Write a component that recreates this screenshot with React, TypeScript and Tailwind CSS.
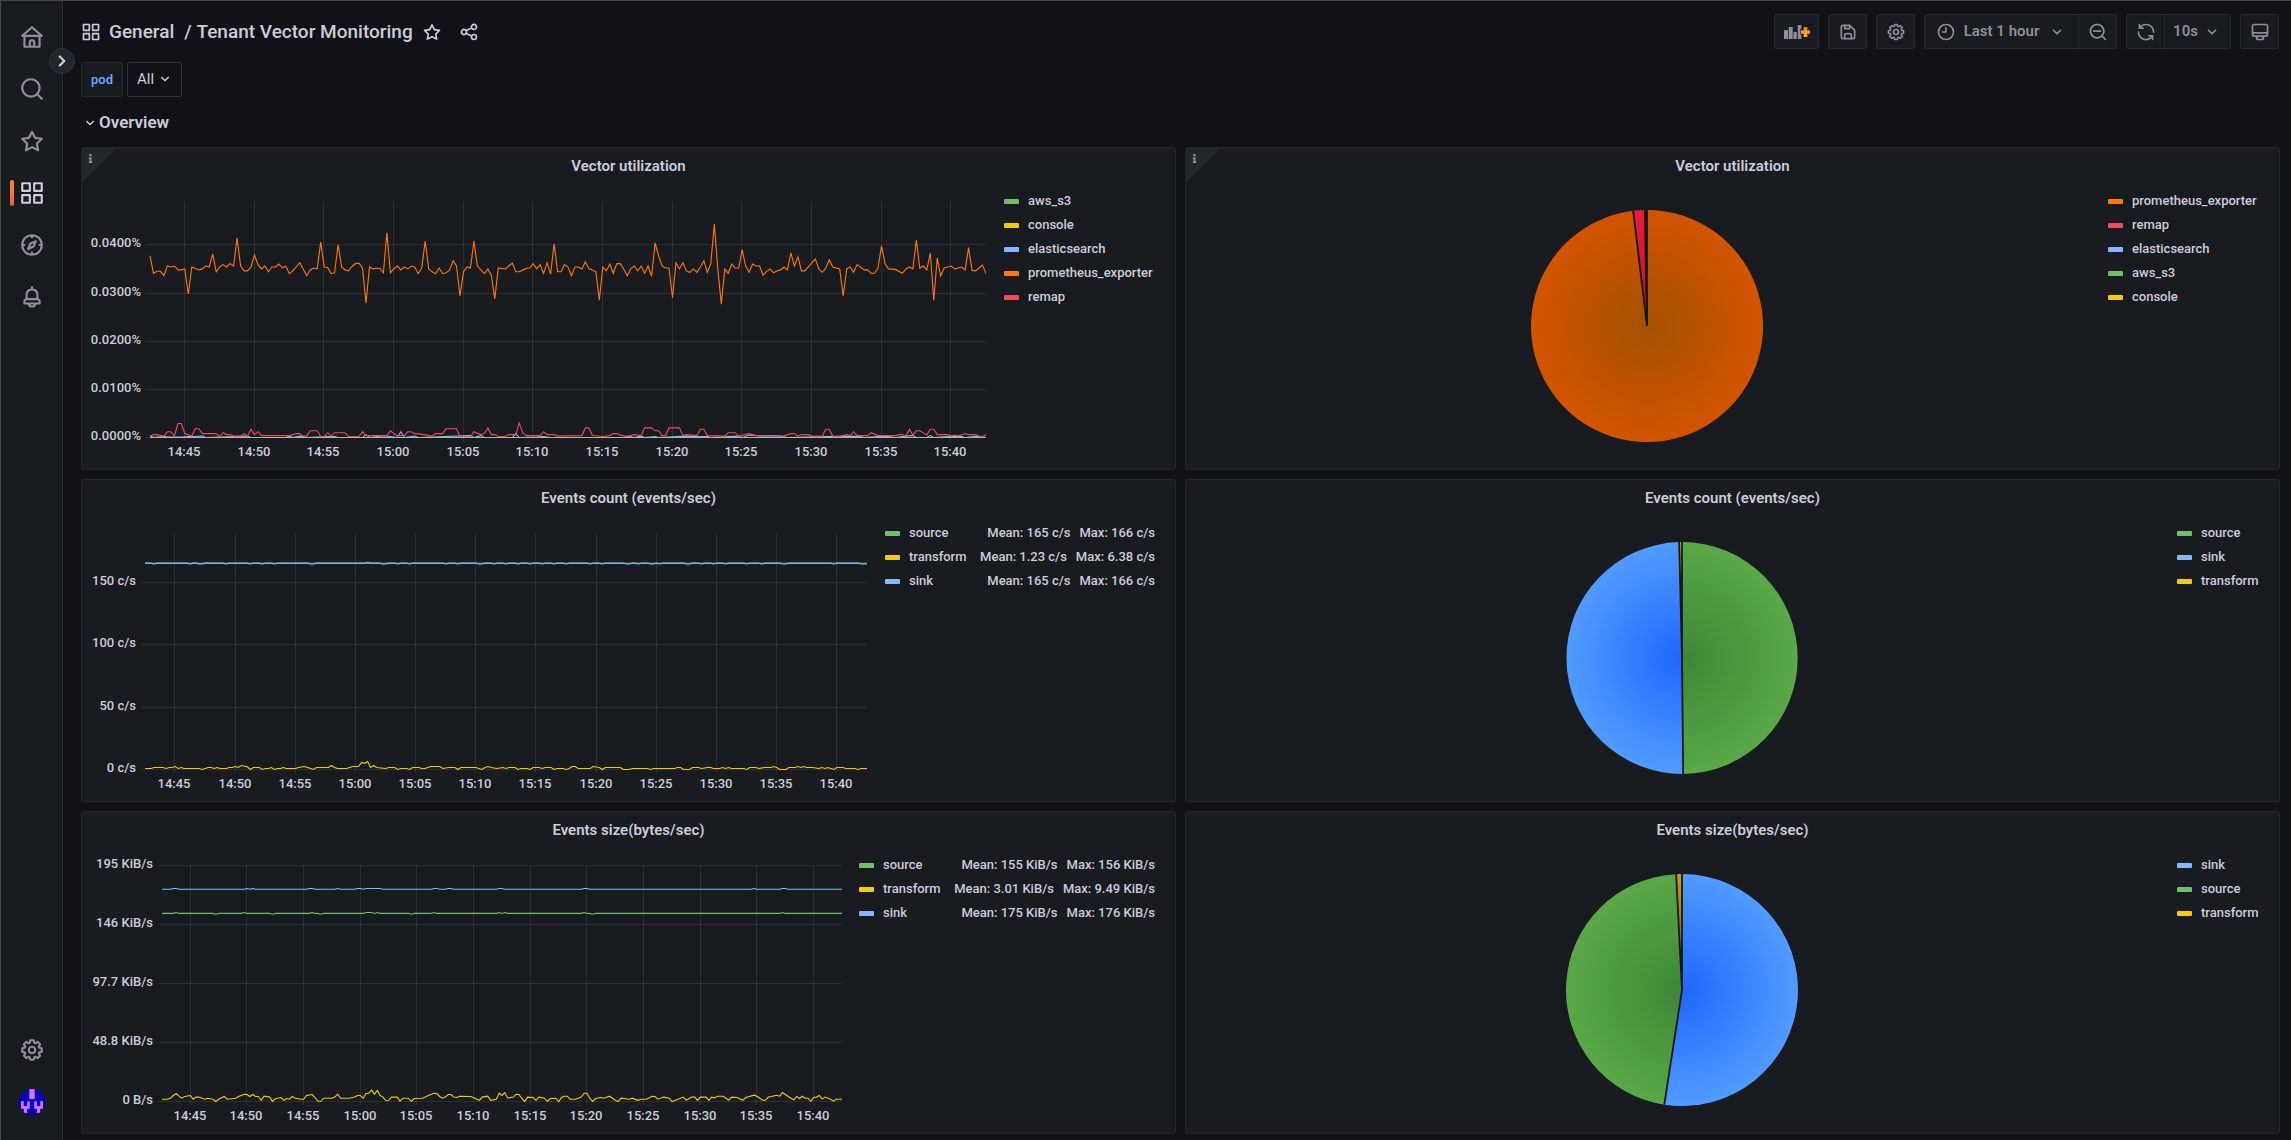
import React, { useLayoutEffect, useRef, useState } from "react";
import { FaInfo } from "react-icons/fa";

const GREEN = "#73bf69";
const YELLOW = "#f2cc0c";
const BLUE = "#8ab8ff";
const ORANGE = "#ff780a";
const RED = "#f2495c";

const ICONS = {
  home: "M21.66,10.25l-9-8a1,1,0,0,0-1.32,0l-9,8a1,1,0,0,0-.27,1.11A1,1,0,0,0,3,12H4v9a1,1,0,0,0,1,1H19a1,1,0,0,0,1-1V12h1a1,1,0,0,0,.93-.64A1,1,0,0,0,21.66,10.25ZM13,20H11V17a1,1,0,0,1,2,0Zm5,0H15V17a3,3,0,0,0-6,0v3H6V12H18ZM5.63,10,12,4.34,18.37,10Z",
  search:
    "M21.71,20.29,18,16.61A9,9,0,1,0,16.61,18l3.68,3.68a1,1,0,0,0,1.42,0A1,1,0,0,0,21.71,20.29ZM11,18a7,7,0,1,1,7-7A7,7,0,0,1,11,18Z",
  star: "M22,9.67A1,1,0,0,0,21.14,9l-5.69-.83L12.9,3a1,1,0,0,0-1.8,0L8.55,8.16,2.86,9a1,1,0,0,0-.81.68,1,1,0,0,0,.25,1l4.13,4-1,5.68A1,1,0,0,0,6.9,21.44L12,18.77l5.1,2.67a.93.93,0,0,0,.46.12,1,1,0,0,0,.59-.19,1,1,0,0,0,.4-1l-1-5.68,4.13-4A1,1,0,0,0,22,9.67Zm-6.15,4a1,1,0,0,0-.29.88l.72,4.2-3.76-2a1.06,1.06,0,0,0-.94,0l-3.76,2,.72-4.2a1,1,0,0,0-.29-.88l-3-3,4.21-.61a1,1,0,0,0,.76-.55L12,5.7l1.88,3.82a1,1,0,0,0,.76.55l4.21.61Z",
  apps: "M10,13H3a1,1,0,0,0-1,1v7a1,1,0,0,0,1,1h7a1,1,0,0,0,1-1V14A1,1,0,0,0,10,13ZM9,20H4V15H9ZM21,2H14a1,1,0,0,0-1,1v7a1,1,0,0,0,1,1h7a1,1,0,0,0,1-1V3A1,1,0,0,0,21,2ZM20,9H15V4h5Zm1,4H14a1,1,0,0,0-1,1v7a1,1,0,0,0,1,1h7a1,1,0,0,0,1-1V14A1,1,0,0,0,21,13Zm-1,7H15V15h5ZM10,2H3A1,1,0,0,0,2,3v7a1,1,0,0,0,1,1h7a1,1,0,0,0,1-1V3A1,1,0,0,0,10,2ZM9,9H4V4H9Z",
  compass:
    "M12,2A10,10,0,1,0,22,12,10,10,0,0,0,12,2Zm1,17.93V19a1,1,0,0,0-2,0v.93A8,8,0,0,1,4.07,13H5a1,1,0,0,0,0-2H4.07A8,8,0,0,1,11,4.07V5a1,1,0,0,0,2,0V4.07A8,8,0,0,1,19.93,11H19a1,1,0,0,0,0,2h.93A8,8,0,0,1,13,19.93ZM15.14,7.55l-5,2.12a1,1,0,0,0-.52.52l-2.12,5a1,1,0,0,0,.21,1.1,1,1,0,0,0,.7.29.93.93,0,0,0,.4-.08l5-2.12a1,1,0,0,0,.52-.52l2.12-5a1,1,0,0,0-1.31-1.31Zm-2.49,5.1-2.28,1,1-2.28,2.28-1Z",
  bell: "M18,13.18V10a6,6,0,0,0-5-5.91V3a1,1,0,0,0-2,0V4.09A6,6,0,0,0,6,10v3.18A3,3,0,0,0,4,16v2a1,1,0,0,0,1,1H8.14a4,4,0,0,0,7.72,0H19a1,1,0,0,0,1-1V16A3,3,0,0,0,18,13.18ZM8,10a4,4,0,0,1,8,0v3H8Zm4,10a2,2,0,0,1-1.72-1h3.44A2,2,0,0,1,12,20Zm6-3H6V16a1,1,0,0,1,1-1H17a1,1,0,0,1,1,1Z",
  cog: "M21.32,9.55l-1.89-.63.89-1.78A1,1,0,0,0,20.13,6L18,3.87a1,1,0,0,0-1.15-.19l-1.78.89-.63-1.89A1,1,0,0,0,13.5,2h-3a1,1,0,0,0-.95.68L8.92,4.57,7.14,3.68A1,1,0,0,0,6,3.87L3.87,6a1,1,0,0,0-.19,1.15l.89,1.78-1.89.63A1,1,0,0,0,2,10.5v3a1,1,0,0,0,.68.95l1.89.63-.89,1.78A1,1,0,0,0,3.87,18L6,20.13a1,1,0,0,0,1.15.19l1.78-.89.63,1.89a1,1,0,0,0,.95.68h3a1,1,0,0,0,.95-.68l.63-1.89,1.78.89A1,1,0,0,0,18,20.13L20.13,18a1,1,0,0,0,.19-1.15l-.89-1.78,1.89-.63A1,1,0,0,0,22,13.5v-3A1,1,0,0,0,21.32,9.55ZM20,12.78l-1.2.4A2,2,0,0,0,17.64,16l.57,1.14-1.1,1.1L16,17.64a2,2,0,0,0-2.79,1.16l-.4,1.2H11.22l-.4-1.2A2,2,0,0,0,8,17.64l-1.14.57-1.1-1.1L6.36,16A2,2,0,0,0,5.2,13.18L4,12.78V11.22l1.2-.4A2,2,0,0,0,6.36,8L5.79,6.89l1.1-1.1L8,6.36A2,2,0,0,0,10.82,5.2l.4-1.2h1.56l.4,1.2A2,2,0,0,0,16,6.36l1.14-.57,1.1,1.1L17.64,8a2,2,0,0,0,1.16,2.79l1.2.4ZM12,8a4,4,0,1,0,4,4A4,4,0,0,0,12,8Zm0,6a2,2,0,1,1,2-2A2,2,0,0,1,12,14Z",
  share:
    "M18,14a4,4,0,0,0-3.08,1.48l-5.1-2.35a3.64,3.64,0,0,0,0-2.26l5.1-2.35A4,4,0,1,0,14,6a4.17,4.17,0,0,0,.07.71L8.79,9.14a4,4,0,1,0,0,5.72l5.28,2.43A4.17,4.17,0,0,0,14,18a4,4,0,1,0,4-4ZM18,4a2,2,0,1,1-2,2A2,2,0,0,1,18,4ZM6,14a2,2,0,1,1,2-2A2,2,0,0,1,6,14Zm12,6a2,2,0,1,1,2-2A2,2,0,0,1,18,20Z",
  angleDown:
    "M17,9.17a1,1,0,0,0-1.41,0L12,12.71,8.46,9.17a1,1,0,0,0-1.41,0,1,1,0,0,0,0,1.42l4.24,4.24a1,1,0,0,0,1.42,0L17,10.59A1,1,0,0,0,17,9.17Z",
  angleRight:
    "M14.83,11.29,10.59,7.05a1,1,0,0,0-1.42,0,1,1,0,0,0,0,1.41L12.71,12,9.17,15.54a1,1,0,0,0,0,1.41,1,1,0,0,0,.71.29,1,1,0,0,0,.71-.29l4.24-4.24A1,1,0,0,0,14.83,11.29Z",
  save: "M20.71,9.29l-6-6a1,1,0,0,0-.32-.21A1.09,1.09,0,0,0,14,3H6A3,3,0,0,0,3,6V18a3,3,0,0,0,3,3H18a3,3,0,0,0,3-3V10A1,1,0,0,0,20.71,9.29ZM9,5h4V7H9Zm6,14H9V16a1,1,0,0,1,1-1h4a1,1,0,0,1,1,1Zm4-1a1,1,0,0,1-1,1H17V16a3,3,0,0,0-3-3H10a3,3,0,0,0-3,3v3H6a1,1,0,0,1-1-1V6A1,1,0,0,1,6,5H7V8A1,1,0,0,0,8,9h6a1,1,0,0,0,1-1V6.41l4,4Z",
  clock:
    "M12,2A10,10,0,1,0,22,12,10,10,0,0,0,12,2Zm0,18a8,8,0,1,1,8-8A8,8,0,0,1,12,20ZM12,6a1,1,0,0,0-1,1v4H8a1,1,0,0,0,0,2h4a1,1,0,0,0,1-1V7A1,1,0,0,0,12,6Z",
  zoomOut:
    "M21.71,20.29,18,16.61A9,9,0,1,0,16.61,18l3.68,3.68a1,1,0,0,0,1.42,0A1,1,0,0,0,21.71,20.29ZM11,18a7,7,0,1,1,7-7A7,7,0,0,1,11,18Zm4-8H7a1,1,0,0,0,0,2h8a1,1,0,0,0,0-2Z",
  sync: "M19.91,15.51H15.38a1,1,0,0,0,0,2h2.4A8,8,0,0,1,4,12a1,1,0,0,0-2,0,10,10,0,0,0,16.88,7.23V21a1,1,0,0,0,2,0V16.5A1,1,0,0,0,19.91,15.51ZM12,2A10,10,0,0,0,5.12,4.77V3a1,1,0,0,0-2,0V7.5a1,1,0,0,0,1,1h4.5a1,1,0,0,0,0-2H6.22A8,8,0,0,1,20,12a1,1,0,0,0,2,0A10,10,0,0,0,12,2Z",
  monitor:
    "M19,2H5A3,3,0,0,0,2,5V15a3,3,0,0,0,3,3H7.64l-.58,1a2,2,0,0,0,0,2,2,2,0,0,0,1.75,1h6.46A2,2,0,0,0,17,21a2,2,0,0,0,0-2l-.59-1H19a3,3,0,0,0,3-3V5A3,3,0,0,0,19,2ZM8.77,20,10,18H14l1.2,2ZM20,15a1,1,0,0,1-1,1H5a1,1,0,0,1-1-1V14H20Zm0-3H4V5A1,1,0,0,1,5,4H19a1,1,0,0,1,1,1Z",
};

type IconName = keyof typeof ICONS;

function Icon({ name, className = "size-5" }: { name: IconName; className?: string }) {
  return (
    <svg viewBox="0 0 24 24" fill="currentColor" aria-hidden="true" className={`shrink-0 ${className}`}>
      <path d={ICONS[name]} />
    </svg>
  );
}

// A series is a list of [sample, value]; the hour holds 240 samples of 15s.
type Point = [number, number];
const SAMPLES = 240;

function parse(text: string): Point[] {
  return text
    .trim()
    .split(/\s+/)
    .map((pair) => pair.split(",").map(Number) as Point);
}

function flat(base: number, up: number[], down: number[], delta: number): Point[] {
  return Array.from({ length: SAMPLES + 1 }, (_, i) => {
    if (up.includes(i)) return [i, base + delta];
    if (down.includes(i)) return [i, base - delta];
    return [i, base];
  });
}

const exporterUtil = parse(`
0,377 1,341 2,345 3,345 4,336 5,356 6,354 7,356 8,348 9,348 10,350 11,298 12,354 14,348 15,350 16,356 17,354 18,381 19,344
20,354 21,359 22,354 23,361 24,356 25,414 26,356 27,346 28,346 29,354 30,379 31,359 32,350 33,356 34,344 35,354 36,354 37,360
38,352 39,356 40,340 41,346 43,363 45,336 46,348 47,352 48,350 49,406 50,354 51,353 52,340 53,342 54,400 55,354 56,348 57,346
58,355 59,361 60,362 61,352 62,279 63,354 64,350 65,352 66,351 67,342 68,425 69,342 70,350 71,356 72,348 73,354 74,350 75,356
76,354 77,340 78,352 79,408 80,350 81,344 82,340 83,352 84,340 85,342 86,348 87,367 88,356 89,294 90,344 91,354 92,352 93,408
94,356 95,348 96,340 97,350 98,336 99,288 100,352 102,350 103,356 104,362 105,344 106,344 108,351 109,352 110,361 111,350
112,359 113,341 114,363 115,339 116,402 117,344 118,344 119,359 120,354 121,336 122,354 123,354 124,350 125,365 126,350
127,348 128,344 129,285 130,354 131,346 132,360 133,341 134,361 135,361 136,350 137,336 138,350 139,356 140,346 141,356
142,341 143,356 144,335 145,404 146,377 147,356 148,352 149,352 150,290 151,363 152,350 153,363 154,346 155,343 156,350
157,343 158,354 159,367 160,343 161,361 162,443 163,350 164,277 165,350 166,341 167,360 168,352 169,352 170,390 171,356
172,343 173,360 174,356 175,356 176,337 177,345 178,350 179,342 180,346 181,348 182,354 183,348 184,383 185,356 186,375
187,346 188,346 191,371 192,350 193,343 194,352 195,369 196,354 198,350 199,294 200,350 201,354 202,343 203,359 205,348
206,348 207,341 208,341 209,352 210,398 211,361 212,350 214,349 216,341 217,350 218,354 219,350 220,410 221,352 222,356
223,348 224,383 225,285 226,373 227,335 228,352 230,356 231,350 233,354 234,348 235,394 236,347 237,346 238,352 239,358 240,341`);

const remapUtil = parse(`
0,3 1,6 2,6 4,3 5,12 6,12 7,3 8,29 9,29 10,8 12,3 13,18 14,18 15,8 19,8 20,2 21,10 22,6 23,6 24,3 26,3 27,8 28,3 29,17 30,6
31,12 32,4 40,4 42,8 43,8 44,3 45,3 46,14 48,14 49,2 50,2 51,10 52,3 53,10 56,10 57,2 60,2 61,12 62,4 68,4 69,14 70,8 71,4
73,4 74,12 75,12 76,8 77,8 81,3 82,8 84,8 85,18 88,18 89,2 92,2 93,12 95,6 96,8 97,20 98,6 99,6 100,2 102,2 103,6 105,6
106,30 107,10 108,4 112,4 113,12 114,6 116,6 117,3 124,4 125,20 126,20 127,4 130,2 132,4 133,8 134,8 135,5 137,2 139,6 141,4
142,20 144,20 145,14 146,14 147,4 148,4 149,20 152,20 153,4 154,6 157,4 158,17 159,17 160,4 165,3 166,10 168,10 169,3 172,8
174,4 182,3 184,8 185,8 186,3 187,6 189,6 190,3 193,3 194,17 195,17 196,3 198,2 200,6 201,4 202,12 203,4 206,4 207,10 209,4
214,4 215,6 216,6 217,3 218,17 219,5 220,14 221,14 223,5 224,17 225,17 226,6 229,6 230,3 231,5 232,3 234,8 235,6 237,6 238,2
239,2 240,6`);

const elasticUtil = parse(`
0,4 1,0 2,1 4,2 6,1 9,1 11,2 12,2 15,3 16,0 24,2 28,3 29,0 39,0 40,3 41,0 43,3 45,0 51,2 53,2 54,0 61,0 62,6 63,0 67,4 70,1
71,0 72,12 73,0 75,2 76,3 77,0 92,4 93,0 95,4 96,0 104,0 105,8 106,0 111,1 113,2 115,0 136,0 137,3 139,0 141,3 142,0 145,2
146,0 154,3 157,2 160,2 161,0 169,3 170,0 172,5 176,3 178,4 181,3 183,0 200,3 204,2 205,0 209,2 212,2 214,0 217,3 219,4 220,0
223,0 224,4 225,0 231,3 233,2 234,0 238,3 240,0`);

const transformCount = parse(`
0,8 2,8 3,16 6,16 7,8 8,16 9,16 10,24 11,8 12,16 13,8 18,8 19,0 21,16 22,16 23,8 24,16 25,8 27,8 28,16 29,16 30,24 31,16 32,32
34,22 35,0 36,16 38,16 39,0 40,8 41,8 42,16 43,0 44,8 45,8 46,16 47,8 50,8 51,16 53,24 54,16 56,0 57,16 61,16 62,32 63,16 64,8
67,8 68,16 69,24 71,24 72,56 73,50 74,64 75,16 76,32 77,16 80,8 81,16 83,16 84,0 85,8 87,8 88,0 89,16 91,16 92,8 93,8 94,16
95,24 98,24 99,8 101,16 103,16 104,0 105,16 110,16 112,0 113,16 114,24 115,16 117,8 119,16 120,8 121,16 123,16 124,0 125,8
127,8 128,0 129,16 131,16 132,8 133,16 135,16 136,0 137,8 139,8 140,0 141,8 142,24 143,24 144,8 148,8 149,24 151,16 152,0
153,16 158,16 159,0 161,0 162,8 167,8 168,0 169,8 176,8 177,16 178,16 179,0 181,0 182,16 184,16 185,8 187,16 188,16 189,8
191,8 192,16 193,8 194,16 195,8 199,8 200,0 201,16 203,16 204,8 206,16 208,16 209,24 210,16 211,0 213,0 214,16 216,16 217,24
218,16 219,24 220,16 222,16 224,8 225,16 226,8 227,16 228,8 229,0 230,16 232,16 233,8 236,8 237,0 238,8 240,8`);

const transformSize = parse(`
0,19 2,19 3,27 4,50 5,66 6,44 7,27 8,41 10,50 11,19 12,36 13,36 15,19 16,27 18,19 19,0 20,19 22,41 23,19 26,27 27,41 29,60
30,58 31,41 32,58 33,41 34,41 35,10 36,44 38,36 39,2 40,22 42,33 43,10 44,25 45,19 46,41 47,27 49,19 50,19 51,50 53,58 54,33
55,3 56,0 57,27 60,27 61,36 62,60 63,27 66,27 68,36 69,50 70,50 71,27 72,66 73,69 74,94 75,60 76,91 77,50 78,36 79,8 80,10
81,36 83,36 84,3 85,27 87,27 88,0 89,25 92,27 94,50 96,69 97,66 98,41 99,27 100,36 101,58 102,58 103,36 104,33 105,44 109,41
112,10 113,36 115,44 116,10 118,19 119,69 120,50 121,74 122,27 124,36 125,60 126,58 127,25 128,0 129,36 131,33 132,8 133,36
135,27 136,0 137,25 139,27 140,0 141,33 142,44 143,44 144,19 146,19 148,36 149,69 150,69 151,25 152,0 153,25 155,33 156,27
158,44 160,10 161,0 162,27 165,19 166,27 168,10 169,19 171,19 173,44 174,41 175,19 177,36 179,27 180,0 181,8 183,27 184,36
185,10 187,36 188,36 189,10 190,36 192,36 193,10 194,36 195,30 196,44 198,44 200,10 201,36 203,33 205,10 206,33 209,52
210,44 212,10 213,10 214,36 215,41 217,52 218,44 219,74 221,41 223,14 224,41 225,25 226,44 227,27 228,27 229,3 230,33 231,36
232,50 233,20 234,36 236,19 237,3 238,19 240,19`);

const countDips = [
  3, 15, 18, 19, 27, 35, 39, 43, 55, 56, 79, 80, 84, 88, 100, 104, 111, 112, 116, 120, 124, 128, 132, 136, 140, 148, 152,
  160, 161, 164, 168, 169, 171, 180, 181, 185, 189, 193, 200, 205, 212, 213, 229, 238, 239, 240,
];
const sinkBumps = [4, 5, 30, 32, 52, 53, 62, 69, 70, 72, 73, 74, 75, 76, 77, 96, 97, 101, 102, 119, 120, 149, 150, 209, 219, 220];

type Series = { color: string; points: Point[] };

type ChartProps = {
  axis: number;
  max: number;
  ticks: { value: number; label: string }[];
  series: Series[];
};

const TIMES = ["14:45", "14:50", "14:55", "15:00", "15:05", "15:10", "15:15", "15:20", "15:25", "15:30", "15:35", "15:40"];

function TimeSeries({ axis, max, ticks, series }: ChartProps) {
  const ref = useRef<HTMLDivElement>(null);
  const [size, setSize] = useState({ width: 0, height: 0 });

  useLayoutEffect(() => {
    const el = ref.current;
    if (!el) return;
    const measure = () => setSize({ width: el.clientWidth, height: el.clientHeight });
    measure();
    const observer = new ResizeObserver(measure);
    observer.observe(el);
    return () => observer.disconnect();
  }, []);

  const { width, height } = size;
  const top = 17;
  const bottom = height - 32;
  const x = (sample: number) => axis + (sample / SAMPLES) * (width - axis);
  const y = (value: number) => bottom - (value / max) * (bottom - top);

  return (
    <div ref={ref} className="min-w-0 flex-1 overflow-hidden">
      {width > 0 && (
        <svg width={width} height={height} className="block" role="img" aria-label="Time series">
          <g fill="#f0faff" fillOpacity="0.09">
            {ticks.map((t) => (
              <rect key={t.label} x={axis - 4} y={Math.round(y(t.value))} width={width - axis + 4} height="1" />
            ))}
            {TIMES.map((t, i) => (
              <rect key={t} x={Math.round(x(9.8 + i * 20))} y={top} width="1" height={bottom - top + 4} />
            ))}
          </g>
          <g className="fill-[#ccccdc] text-[13px] font-medium">
            {ticks.map((t) => (
              <text key={t.label} x={axis - 9} y={Math.round(y(t.value)) + 3} textAnchor="end">
                {t.label}
              </text>
            ))}
            {TIMES.map((t, i) => (
              <text key={t} x={Math.round(x(9.8 + i * 20))} y={bottom + 19} textAnchor="middle">
                {t}
              </text>
            ))}
          </g>
          {series.map((s, i) => (
            <polyline
              key={i}
              fill="none"
              stroke={s.color}
              strokeWidth="1.1"
              points={s.points.map(([px, py]) => `${x(px).toFixed(1)},${(y(py) + 0.5).toFixed(1)}`).join(" ")}
            />
          ))}
        </svg>
      )}
    </div>
  );
}

type Slice = { value: number; from: string; to: string };

function Pie({ id, slices }: { id: string; slices: Slice[] }) {
  const r = 116;
  const total = slices.reduce((sum, s) => sum + s.value, 0);
  const at = (share: number) => {
    const a = share * 2 * Math.PI;
    return `${(r * Math.sin(a)).toFixed(2)} ${(-r * Math.cos(a)).toFixed(2)}`;
  };
  let acc = 0;
  const arcs = slices.map((s) => {
    const start = acc / total;
    acc += s.value;
    return { ...s, start, end: acc / total };
  });

  return (
    <div className="flex min-w-0 flex-1 items-center justify-center pb-[2px]">
      <svg viewBox="-117 -117 234 234" className="size-[234px]" role="img" aria-label="Pie chart">
        <defs>
          {arcs.map((a, i) => (
            <radialGradient key={i} id={`${id}-${i}`} gradientUnits="userSpaceOnUse" cx="0" cy="0" r={r}>
              <stop offset="0" stopColor={a.from} />
              <stop offset="1" stopColor={a.to} />
            </radialGradient>
          ))}
        </defs>
        {arcs.map((a, i) => (
          <path
            key={i}
            d={`M0 0L${at(a.start)}A${r} ${r} 0 ${a.end - a.start > 0.5 ? 1 : 0} 1 ${at(a.end)}Z`}
            fill={`url(#${id}-${i})`}
          />
        ))}
        {arcs.map((a, i) => (
          <path key={i} d={`M0 0L${at(a.start)}`} stroke="#15161a" strokeWidth="1.8" />
        ))}
      </svg>
    </div>
  );
}

type LegendItem = { name: string; color: string; stats?: string[] };

function Legend({ items, className }: { items: LegendItem[]; className: string }) {
  return (
    <ul className={`mr-5 shrink-0 pt-[5px] text-[13px] leading-6 font-medium whitespace-nowrap ${className}`}>
      {items.map((item) => (
        <li key={item.name} className="flex items-center">
          <svg viewBox="0 0 15 5" className="mr-[9px] h-[5px] w-[15px]" aria-hidden="true">
            <rect width="15" height="5" rx="1" fill={item.color} />
          </svg>
          <button type="button">{item.name}</button>
          <span className="ml-auto flex gap-[9px]">
            {item.stats?.map((s) => (
              <span key={s}>{s}</span>
            ))}
          </span>
        </li>
      ))}
    </ul>
  );
}

function Panel({ title, info, children }: { title: string; info?: boolean; children: React.ReactNode }) {
  return (
    <section className="relative flex min-w-0 flex-col rounded-[3px] border border-[#25272c] bg-[#181b1f]">
      {info && (
        <span className="absolute top-0 left-0 size-[35px] bg-[#22272b] text-[#9090a0] [clip-path:polygon(0_0,100%_0,0_100%)]">
          <FaInfo className="mt-[6px] ml-1 size-[9px]" />
        </span>
      )}
      <h2 className="h-9 text-center text-[15px] leading-9 font-semibold">{title}</h2>
      <div className="flex min-h-0 flex-1">{children}</div>
    </section>
  );
}

function SidebarItem({ name, label, active }: { name: IconName; label: string; active?: boolean }) {
  return (
    <a
      href="#"
      aria-label={label}
      className={`relative flex h-[52px] items-center justify-center ${active ? "text-[#ccccdc]" : "text-[#8e8e99]"}`}
    >
      {active && (
        <span className="absolute left-[9px] h-[26px] w-1 rounded-[2px] bg-linear-to-b from-[#ff8833] to-[#f55f3e]" />
      )}
      <Icon name={name} className="size-[26px]" />
    </a>
  );
}

function Sidebar() {
  return (
    <nav className="relative flex w-[62px] shrink-0 flex-col border-r border-[#2a2c31] bg-[#181b1f] pt-[10px] pb-[13px]">
      <SidebarItem name="home" label="Home" />
      <SidebarItem name="search" label="Search dashboards" />
      <SidebarItem name="star" label="Starred" />
      <SidebarItem name="apps" label="Dashboards" active />
      <SidebarItem name="compass" label="Explore" />
      <SidebarItem name="bell" label="Alerting" />
      <div className="flex-1" />
      <SidebarItem name="cog" label="Configuration" />
      <a href="#" aria-label="Profile" className="flex h-[52px] items-center justify-center">
        <svg viewBox="0 0 26 26" className="size-[26px] rounded-full" aria-hidden="true">
          <rect width="26" height="26" fill="#0400b8" />
          <g fill="#cf70ff">
            <rect x="10.3" width="5.4" height="10" />
            <path d="M2 12.3h2.8v4.7h3.4v-4.7h2.6v7.4H8.2v4.6H4.8v-4.6H2z" />
            <path d="M15.2 12.3h2.6v4.7h3.4v-4.7H24v7.4h-2.8v4.6h-3.4v-4.6h-2.6z" />
          </g>
        </svg>
      </a>
      <button
        type="button"
        aria-label="Expand sidebar"
        className="absolute top-[47px] -right-[13px] flex size-[26px] items-center justify-center rounded-full border border-[#2f3237] bg-[#22252b]"
      >
        <Icon name="angleRight" className="size-[26px]" />
      </button>
    </nav>
  );
}

const toolButton = "flex h-[35px] items-center justify-center border border-[#25272c] bg-[#181b1f]";

function Toolbar() {
  return (
    <div className="flex gap-[9px] text-[15px] font-semibold text-[#8e8e99]">
      <button type="button" aria-label="Add panel" className={`${toolButton} w-[45px] rounded-[2px]`}>
        <svg viewBox="0 0 26 16" className="h-4 w-[26px]" aria-hidden="true">
          <defs>
            <linearGradient id="plus" x1="0" y1="0" x2="0" y2="1">
              <stop offset="0" stopColor="#f2762b" />
              <stop offset="1" stopColor="#fbc316" />
            </linearGradient>
          </defs>
          <path fill="currentColor" d="M0 6h4v9H0zM4.7 3h4v12h-4zM9.4 8h3.4v7H9.4zM13.8 1h3.6v4h-1v6h1v4h-3.6z" />
          <path fill="url(#plus)" d="M19.7 3h3.6v3.2H26v3.6h-2.7V13h-3.6V9.8H17V6.2h2.7z" />
        </svg>
      </button>
      <button type="button" aria-label="Save dashboard" className={`${toolButton} w-[39px] rounded-[2px]`}>
        <Icon name="save" />
      </button>
      <button type="button" aria-label="Dashboard settings" className={`${toolButton} w-[39px] rounded-[2px]`}>
        <Icon name="cog" />
      </button>
      <div className="flex">
        <button type="button" className={`${toolButton} w-[155px] rounded-l-[2px]`}>
          <Icon name="clock" />
          <span className="mr-2 ml-2">Last 1 hour</span>
          <Icon name="angleDown" />
        </button>
        <button type="button" aria-label="Zoom out" className={`${toolButton} w-[38px] rounded-r-[2px] border-l-0`}>
          <Icon name="zoomOut" />
        </button>
      </div>
      <div className="flex">
        <button type="button" aria-label="Refresh" className={`${toolButton} w-[39px] rounded-l-[2px]`}>
          <Icon name="sync" />
        </button>
        <button type="button" className={`${toolButton} w-[66px] gap-1 rounded-r-[2px] border-l-0`}>
          10s
          <Icon name="angleDown" />
        </button>
      </div>
      <button type="button" aria-label="Cycle view mode" className={`${toolButton} w-[39px] rounded-[2px]`}>
        <Icon name="monitor" />
      </button>
    </div>
  );
}

const ORANGE_SLICE = { from: "#a35200", to: "#d35400" };
const RED_SLICE = { from: "#b81224", to: "#ee1a3c" };
const GREEN_SLICE = { from: "#3f8637", to: "#5aa847" };
const BLUE_SLICE = { from: "#1f66ff", to: "#529bff" };
const YELLOW_SLICE = { from: "#7a4a00", to: "#cc9d00" };

export default function App() {
  return (
    <div className="flex min-h-screen border-t border-l border-[#454746] bg-[#111217] font-[Roboto,sans-serif] text-[#ccccdc]">
      <Sidebar />
      <main className="min-w-0 flex-1 pr-[11px] pb-[7px] pl-[18px]">
        <header className="flex items-center justify-between pt-[13px] pr-[1px]">
          <div className="flex items-center">
            <Icon name="apps" />
            <h1 className="ml-2 flex text-[19px] leading-7 font-medium">
              <a href="#">General</a>
              <span className="ml-[10px] whitespace-pre">/ </span>
              <a href="#">Tenant Vector Monitoring</a>
            </h1>
            <button type="button" aria-label="Mark as favorite" className="ml-[9px]">
              <Icon name="star" />
            </button>
            <button type="button" aria-label="Share dashboard" className="ml-[17px]">
              <Icon name="share" />
            </button>
          </div>
          <Toolbar />
        </header>

        <div className="mt-[13px] flex gap-1">
          <label
            htmlFor="pod"
            className="flex h-[35px] w-[42px] items-center justify-center rounded-[2px] border border-[#25272c] bg-[#181b1f] text-[13px] font-semibold text-[#6e9fff]"
          >
            pod
          </label>
          <div className="relative">
            <select
              id="pod"
              className="h-[35px] w-[55px] appearance-none rounded-[2px] border border-[#2f3136] bg-[#111217] pl-[9px] text-[15px]"
            >
              <option>All</option>
            </select>
            <Icon name="angleDown" className="pointer-events-none absolute top-2 right-2 size-[18px]" />
          </div>
        </div>

        <button type="button" className="mt-[14px] flex h-6 items-center text-[17px] font-semibold">
          <Icon name="angleDown" className="size-[18px]" />
          Overview
        </button>

        <div className="mt-3 grid auto-rows-[323px] grid-cols-2 gap-[9px]">
          <Panel title="Vector utilization" info>
            <TimeSeries
              axis={68}
              max={490}
              ticks={[
                { value: 400, label: "0.0400%" },
                { value: 300, label: "0.0300%" },
                { value: 200, label: "0.0200%" },
                { value: 100, label: "0.0100%" },
                { value: 0, label: "0.0000%" },
              ]}
              series={[
                { color: BLUE, points: elasticUtil },
                { color: ORANGE, points: exporterUtil },
                { color: RED, points: remapUtil },
                { color: "#9dbf9f", points: flat(0, [], [], 0) },
              ]}
            />
            <Legend
              className="ml-[18px] w-[151px]"
              items={[
                { name: "aws_s3", color: GREEN },
                { name: "console", color: YELLOW },
                { name: "elasticsearch", color: BLUE },
                { name: "prometheus_exporter", color: ORANGE },
                { name: "remap", color: RED },
              ]}
            />
          </Panel>
          <Panel title="Vector utilization" info>
            <Pie
              id="utilization"
              slices={[
                { value: 98.1, ...ORANGE_SLICE },
                { value: 1.6, ...RED_SLICE },
                { value: 0.3, from: "#15161a", to: "#15161a" },
              ]}
            />
            <Legend
              className="w-[151px]"
              items={[
                { name: "prometheus_exporter", color: ORANGE },
                { name: "remap", color: RED },
                { name: "elasticsearch", color: BLUE },
                { name: "aws_s3", color: GREEN },
                { name: "console", color: YELLOW },
              ]}
            />
          </Panel>

          <Panel title="Events count (events/sec)">
            <TimeSeries
              axis={63}
              max={1890}
              ticks={[
                { value: 1500, label: "150 c/s" },
                { value: 1000, label: "100 c/s" },
                { value: 500, label: "50 c/s" },
                { value: 0, label: "0 c/s" },
              ]}
              series={[
                { color: GREEN, points: flat(1651, [], [], 0) },
                { color: YELLOW, points: transformCount },
                { color: BLUE, points: flat(1653, [74], countDips, 7) },
              ]}
            />
            <Legend
              className="ml-[18px] w-[270px]"
              items={[
                { name: "source", color: GREEN, stats: ["Mean: 165 c/s", "Max: 166 c/s"] },
                { name: "transform", color: YELLOW, stats: ["Mean: 1.23 c/s", "Max: 6.38 c/s"] },
                { name: "sink", color: BLUE, stats: ["Mean: 165 c/s", "Max: 166 c/s"] },
              ]}
            />
          </Panel>
          <Panel title="Events count (events/sec)">
            <Pie
              id="count"
              slices={[
                { value: 165.2, ...GREEN_SLICE },
                { value: 165, ...BLUE_SLICE },
                { value: 1.3, ...YELLOW_SLICE },
              ]}
            />
            <Legend
              className="w-[82px]"
              items={[
                { name: "source", color: GREEN },
                { name: "sink", color: BLUE },
                { name: "transform", color: YELLOW },
              ]}
            />
          </Panel>

          <Panel title="Events size(bytes/sec)">
            <TimeSeries
              axis={80}
              max={1953}
              ticks={[
                { value: 1953, label: "195 KiB/s" },
                { value: 1465, label: "146 KiB/s" },
                { value: 977, label: "97.7 KiB/s" },
                { value: 488, label: "48.8 KiB/s" },
                { value: 0, label: "0 B/s" },
              ]}
              series={[
                { color: GREEN, points: flat(1557, [5, 29, 53, 72, 73, 74, 76, 96, 119, 121, 149, 219], [19, 39, 56, 88, 152], 7) },
                { color: YELLOW, points: transformSize },
                { color: BLUE, points: flat(1756, sinkBumps, [], 7) },
              ]}
            />
            <Legend
              className="ml-[17px] w-[296px]"
              items={[
                { name: "source", color: GREEN, stats: ["Mean: 155 KiB/s", "Max: 156 KiB/s"] },
                { name: "transform", color: YELLOW, stats: ["Mean: 3.01 KiB/s", "Max: 9.49 KiB/s"] },
                { name: "sink", color: BLUE, stats: ["Mean: 175 KiB/s", "Max: 176 KiB/s"] },
              ]}
            />
          </Panel>
          <Panel title="Events size(bytes/sec)">
            <Pie
              id="size"
              slices={[
                { value: 175, ...BLUE_SLICE },
                { value: 156, ...GREEN_SLICE },
                { value: 2.7, ...YELLOW_SLICE },
              ]}
            />
            <Legend
              className="w-[82px]"
              items={[
                { name: "sink", color: BLUE },
                { name: "source", color: GREEN },
                { name: "transform", color: YELLOW },
              ]}
            />
          </Panel>
        </div>
      </main>
    </div>
  );
}
